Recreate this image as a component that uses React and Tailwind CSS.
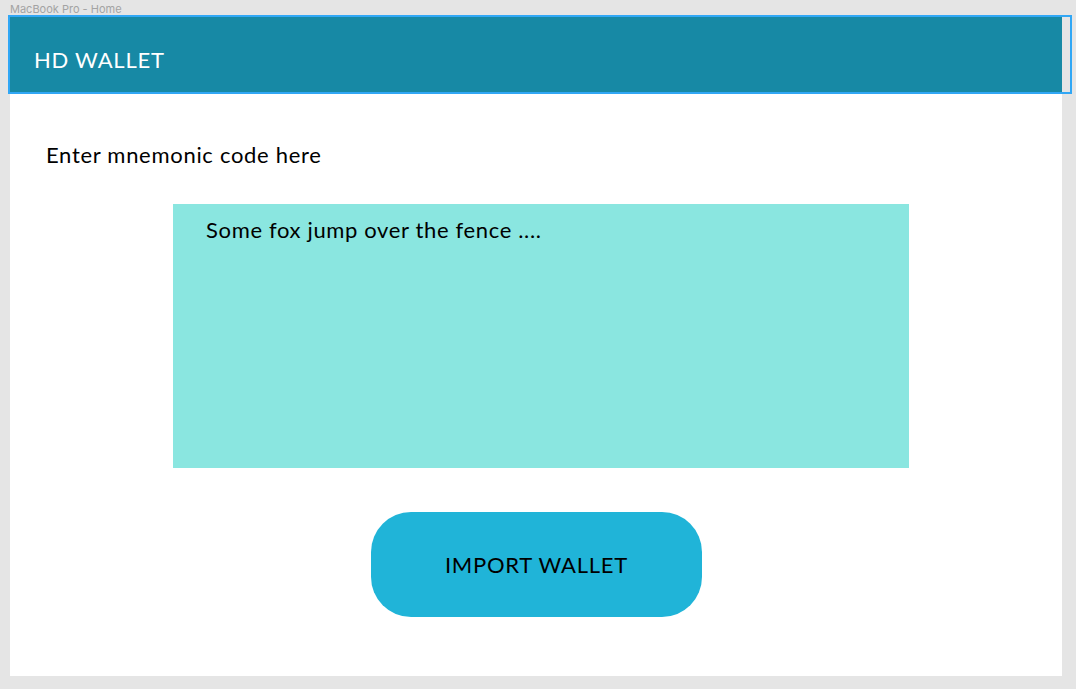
export default function App() {
  return (
    <div className="relative w-[1076px] h-[689px] bg-[#e5e5e5] overflow-hidden" style={{ fontFamily: "Lato, 'Noto Sans', sans-serif" }}>
      <div className="flex flex-col pl-[10px]">
        <div className="h-[17px] pt-[2px] text-[11px] leading-[15px] text-[#a3a3a3]" style={{ fontFamily: "Inter, 'Liberation Sans', sans-serif" }}>
          MacBook Pro - Home
        </div>
        <div className="w-[1052px] h-[659px] bg-white flex flex-col">
          <div className="h-[75px] bg-[#1789a5] pl-[24px] pt-[30px]">
            <div className="text-white text-[22px] leading-[25px] tracking-[0.75px]">HD WALLET</div>
          </div>
          <div className="pl-[36px] pt-[50px] text-black text-[22px] leading-[25px] tracking-[0.7px]">
            Enter mnemonic code here
          </div>
          <div className="ml-[163px] mt-[37px] w-[736px] h-[264px] bg-[#8ae6e0] pl-[33px] pt-[13px] text-black text-[22px] leading-[25px] tracking-[0.65px]">
            Some fox jump over the fence ....
          </div>
          <div className="ml-[361px] mt-[44px] w-[331px] h-[105px] rounded-[40px] bg-[#20b4d8] flex items-center justify-center text-black text-[22px] leading-[25px] tracking-[0.75px]">
            IMPORT WALLET
          </div>
        </div>
      </div>
      <div className="absolute left-[8px] top-[15px] w-[1064px] h-[79px] border-2 border-[#31a7f5] pointer-events-none" />
    </div>
  );
}
